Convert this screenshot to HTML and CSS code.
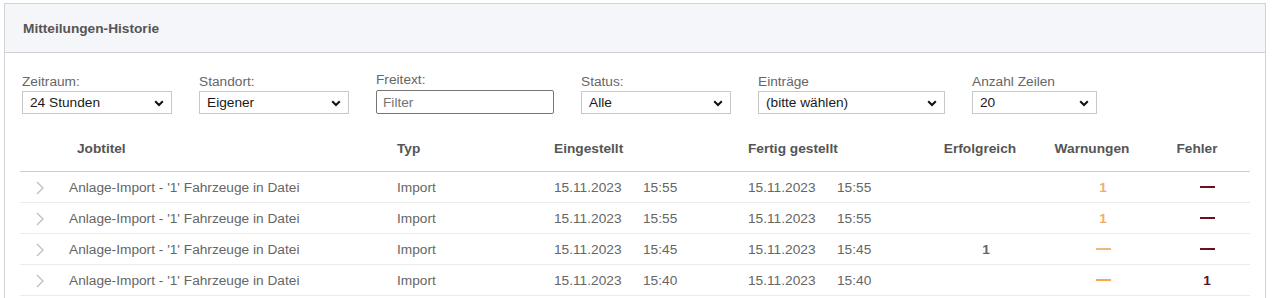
FILE: index.html
```html
<!DOCTYPE html>
<html lang="de">
<head>
<meta charset="utf-8">
<title>Mitteilungen-Historie</title>
<link rel="stylesheet" href="styles.css">
</head>
<body>
<div class="panel">
  <div class="panel-head">Mitteilungen-Historie</div>
  <div class="panel-body">
    <div class="filters">
      <div class="field">
        <label class="lbl">Zeitraum:</label>
        <div class="sel w150"><span>24 Stunden</span><svg class="caret" width="10" height="7" viewBox="0 0 10 7"><polyline points="1.2,1.2 5,5 8.8,1.2" fill="none" stroke="#111" stroke-width="2"/></svg></div>
      </div>
      <div class="field">
        <label class="lbl">Standort:</label>
        <div class="sel w150"><span>Eigener</span><svg class="caret" width="10" height="7" viewBox="0 0 10 7"><polyline points="1.2,1.2 5,5 8.8,1.2" fill="none" stroke="#111" stroke-width="2"/></svg></div>
      </div>
      <div class="field free">
        <label class="lbl">Freitext:</label>
        <input class="txt" type="text" placeholder="Filter">
      </div>
      <div class="field">
        <label class="lbl">Status:</label>
        <div class="sel w150"><span>Alle</span><svg class="caret" width="10" height="7" viewBox="0 0 10 7"><polyline points="1.2,1.2 5,5 8.8,1.2" fill="none" stroke="#111" stroke-width="2"/></svg></div>
      </div>
      <div class="field">
        <label class="lbl">Einträge</label>
        <div class="sel w187"><span>(bitte wählen)</span><svg class="caret" width="10" height="7" viewBox="0 0 10 7"><polyline points="1.2,1.2 5,5 8.8,1.2" fill="none" stroke="#111" stroke-width="2"/></svg></div>
      </div>
      <div class="field">
        <label class="lbl">Anzahl Zeilen</label>
        <div class="sel w125"><span>20</span><svg class="caret" width="10" height="7" viewBox="0 0 10 7"><polyline points="1.2,1.2 5,5 8.8,1.2" fill="none" stroke="#111" stroke-width="2"/></svg></div>
      </div>
    </div>

    <div class="table">
      <div class="row head">
        <div></div>
        <div class="h-job">Jobtitel</div>
        <div>Typ</div>
        <div>Eingestellt</div>
        <div>Fertig gestellt</div>
        <div class="c h-ok">Erfolgreich</div>
        <div class="c h-warn">Warnungen</div>
        <div class="c h-err">Fehler</div>
      </div>

      <div class="row">
        <div class="chev"><svg width="8" height="14" viewBox="0 0 8 14"><polyline points="1,1 7,7 1,13" fill="none" stroke="#bcbcbc" stroke-width="1.2"/></svg></div>
        <div>Anlage-Import - '1' Fahrzeuge in Datei</div>
        <div>Import</div>
        <div><span class="d">15.11.2023</span>15:55</div>
        <div><span class="d">15.11.2023</span>15:55</div>
        <div class="c"></div>
        <div class="c"><span class="num warn">1</span></div>
        <div class="c"><span class="dash err"></span></div>
      </div>

      <div class="row">
        <div class="chev"><svg width="8" height="14" viewBox="0 0 8 14"><polyline points="1,1 7,7 1,13" fill="none" stroke="#bcbcbc" stroke-width="1.2"/></svg></div>
        <div>Anlage-Import - '1' Fahrzeuge in Datei</div>
        <div>Import</div>
        <div><span class="d">15.11.2023</span>15:55</div>
        <div><span class="d">15.11.2023</span>15:55</div>
        <div class="c"></div>
        <div class="c"><span class="num warn">1</span></div>
        <div class="c"><span class="dash err"></span></div>
      </div>

      <div class="row">
        <div class="chev"><svg width="8" height="14" viewBox="0 0 8 14"><polyline points="1,1 7,7 1,13" fill="none" stroke="#bcbcbc" stroke-width="1.2"/></svg></div>
        <div>Anlage-Import - '1' Fahrzeuge in Datei</div>
        <div>Import</div>
        <div><span class="d">15.11.2023</span>15:45</div>
        <div><span class="d">15.11.2023</span>15:45</div>
        <div class="c"><span class="num ok">1</span></div>
        <div class="c"><span class="dash warnd"></span></div>
        <div class="c"><span class="dash err"></span></div>
      </div>

      <div class="row">
        <div class="chev"><svg width="8" height="14" viewBox="0 0 8 14"><polyline points="1,1 7,7 1,13" fill="none" stroke="#bcbcbc" stroke-width="1.2"/></svg></div>
        <div>Anlage-Import - '1' Fahrzeuge in Datei</div>
        <div>Import</div>
        <div><span class="d">15.11.2023</span>15:40</div>
        <div><span class="d">15.11.2023</span>15:40</div>
        <div class="c"></div>
        <div class="c"><span class="dash warnd2"></span></div>
        <div class="c"><span class="num errn">1</span></div>
      </div>
    </div>
  </div>
</div>
</body>
</html>
```

FILE: styles.css
```css
* { box-sizing: border-box; }

html, body {
  margin: 0;
  padding: 0;
  background: #fff;
}

body {
  font-family: "Liberation Sans", Arial, sans-serif;
  font-size: 13.7px;
  color: #666;
  overflow: hidden;
}

.panel {
  margin: 3px 8px 0 4px;
  border: 1px solid #d2d3d8;
  border-bottom: none;
  height: 300px;
}

.panel-head {
  height: 49px;
  background: #f5f6fa;
  border-bottom: 1px solid #cfd0d4;
  padding-left: 18px;
  display: flex;
  align-items: center;
  font-weight: bold;
  color: #555;
  padding-top: 1px;
}

.panel-body {
  padding: 19px 0 0 17px;
}

.filters {
  display: flex;
  align-items: flex-end;
  gap: 27px;
}

.field {
  display: flex;
  flex-direction: column;
}

.lbl {
  line-height: 16px;
  height: 16px;
  color: #666;
  margin-bottom: 1px;
}

.free .lbl {
  margin-bottom: 2px;
}

.sel {
  position: relative;
  height: 23px;
  border: 1px solid #c8c8c8;
  background: #fff;
  color: #1a1a1a;
  display: flex;
  align-items: center;
  padding-left: 7px;
}

.sel .caret {
  position: absolute;
  right: 7px;
  top: 8px;
}

.w150 { width: 150px; }
.w187 { width: 187px; }
.w125 { width: 125px; }

.txt {
  width: 178px;
  height: 24px;
  border: 1px solid #767676;
  border-radius: 2px;
  font: inherit;
  color: #222;
  padding: 0 6px;
  outline: none;
}

.txt::placeholder {
  color: #757575;
}

.table {
  margin-top: 11px;
  margin-left: -2px;
  width: 1230px;
}

.row {
  display: grid;
  grid-template-columns: 49px 328px 157px 194px 182px 112px 122px 86px;
  height: 31px;
  align-items: center;
  border-bottom: 1px solid #ebebeb;
  white-space: nowrap;
}

.row.head {
  height: 47px;
  border-bottom: 1px solid #cdcdcd;
  font-weight: bold;
  color: #555;
  padding-top: 1px;
}

.h-job { padding-left: 8px; }
.h-ok { padding-right: 12px; }
.h-warn { padding-right: 22px; }
.h-err { padding-right: 20px; }

.c {
  display: flex;
  justify-content: center;
  align-items: center;
}

.chev {
  display: flex;
  align-items: center;
  padding-left: 16px;
  padding-top: 1px;
}

.d {
  display: inline-block;
  width: 89px;
}

.num {
  font-weight: bold;
}

.num.warn { color: #f2ad6b; }
.num.ok { color: #666; }
.num.errn { color: #5a1430; }

.dash {
  display: inline-block;
  width: 15px;
  height: 2px;
}

.dash.err { background: #6a1020; }
.dash.warnd { background: #f3b679; }
.dash.warnd2 { background: #f8a852; }
```
